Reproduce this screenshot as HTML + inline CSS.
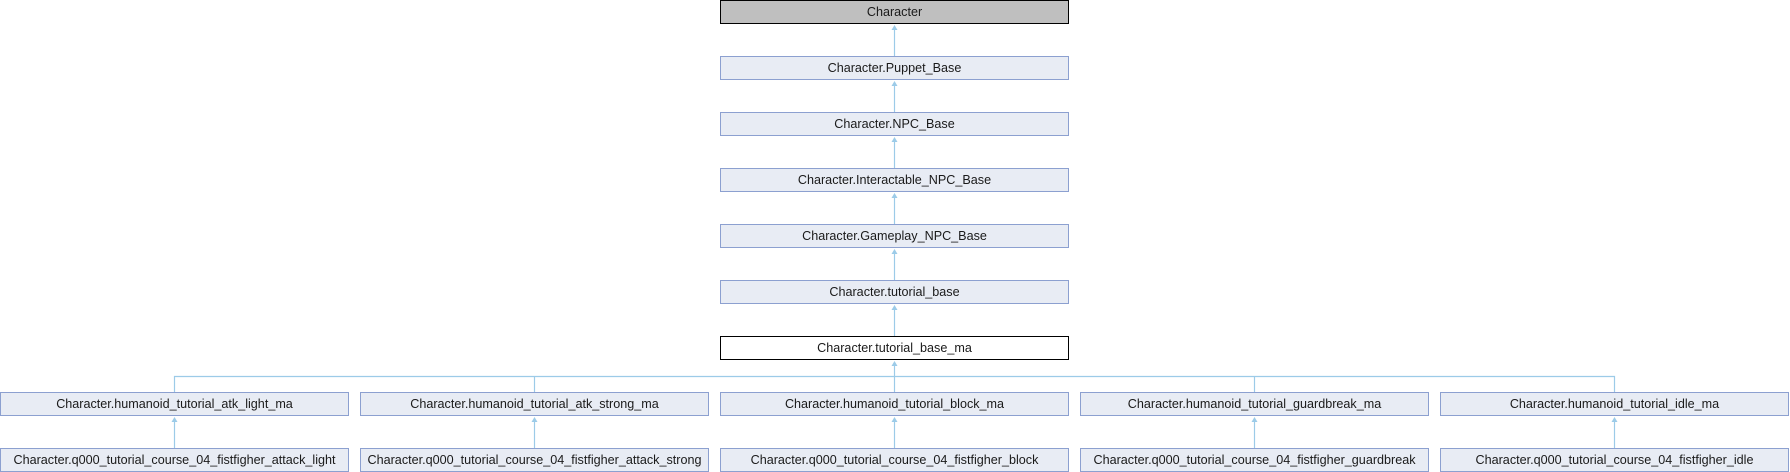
<!DOCTYPE html>
<html><head><meta charset="utf-8"><style>
html,body{margin:0;padding:0;background:#fff;width:1790px;height:472px;overflow:hidden}
svg text{font-family:"Liberation Sans",Arial,sans-serif;font-size:12.6px;fill:#1a1a1a}
</style></head><body>
<svg width="1790" height="472" xmlns="http://www.w3.org/2000/svg">
<g stroke="#9ccbe8" stroke-width="1.2" fill="none">
<line x1="894.5" y1="28" x2="894.5" y2="56"/>
<line x1="894.5" y1="84" x2="894.5" y2="112"/>
<line x1="894.5" y1="140" x2="894.5" y2="168"/>
<line x1="894.5" y1="196" x2="894.5" y2="224"/>
<line x1="894.5" y1="252" x2="894.5" y2="280"/>
<line x1="894.5" y1="308" x2="894.5" y2="336"/>
<line x1="894.5" y1="364" x2="894.5" y2="392"/>
<polyline points="174.5,392 174.5,376.5 1614.5,376.5 1614.5,392"/>
<line x1="534.5" y1="376" x2="534.5" y2="392"/>
<line x1="1254.5" y1="376" x2="1254.5" y2="392"/>
<line x1="174.5" y1="420" x2="174.5" y2="448"/>
<line x1="534.5" y1="420" x2="534.5" y2="448"/>
<line x1="894.5" y1="420" x2="894.5" y2="448"/>
<line x1="1254.5" y1="420" x2="1254.5" y2="448"/>
<line x1="1614.5" y1="420" x2="1614.5" y2="448"/>
</g>
<g fill="#9ccbe8">
<polygon points="894.5,25 891.5,30 897.5,30"/>
<polygon points="894.5,81 891.5,86 897.5,86"/>
<polygon points="894.5,137 891.5,142 897.5,142"/>
<polygon points="894.5,193 891.5,198 897.5,198"/>
<polygon points="894.5,249 891.5,254 897.5,254"/>
<polygon points="894.5,305 891.5,310 897.5,310"/>
<polygon points="894.5,361 891.5,366 897.5,366"/>
<polygon points="174.5,417 171.5,422 177.5,422"/>
<polygon points="534.5,417 531.5,422 537.5,422"/>
<polygon points="894.5,417 891.5,422 897.5,422"/>
<polygon points="1254.5,417 1251.5,422 1257.5,422"/>
<polygon points="1614.5,417 1611.5,422 1617.5,422"/>
</g>
<g stroke-width="1">
<rect x="720.5" y="0.5" width="348" height="23" fill="#bfbfbf" stroke="#000"/>
<rect x="720.5" y="56.5" width="348" height="23" fill="#e8ecf4" stroke="#8ca0d0"/>
<rect x="720.5" y="112.5" width="348" height="23" fill="#e8ecf4" stroke="#8ca0d0"/>
<rect x="720.5" y="168.5" width="348" height="23" fill="#e8ecf4" stroke="#8ca0d0"/>
<rect x="720.5" y="224.5" width="348" height="23" fill="#e8ecf4" stroke="#8ca0d0"/>
<rect x="720.5" y="280.5" width="348" height="23" fill="#e8ecf4" stroke="#8ca0d0"/>
<rect x="720.5" y="336.5" width="348" height="23" fill="#fff" stroke="#000"/>
<rect x="0.5" y="392.5" width="348" height="23" fill="#e8ecf4" stroke="#8ca0d0"/>
<rect x="360.5" y="392.5" width="348" height="23" fill="#e8ecf4" stroke="#8ca0d0"/>
<rect x="720.5" y="392.5" width="348" height="23" fill="#e8ecf4" stroke="#8ca0d0"/>
<rect x="1080.5" y="392.5" width="348" height="23" fill="#e8ecf4" stroke="#8ca0d0"/>
<rect x="1440.5" y="392.5" width="348" height="23" fill="#e8ecf4" stroke="#8ca0d0"/>
<rect x="0.5" y="448.5" width="348" height="23" fill="#e8ecf4" stroke="#8ca0d0"/>
<rect x="360.5" y="448.5" width="348" height="23" fill="#e8ecf4" stroke="#8ca0d0"/>
<rect x="720.5" y="448.5" width="348" height="23" fill="#e8ecf4" stroke="#8ca0d0"/>
<rect x="1080.5" y="448.5" width="348" height="23" fill="#e8ecf4" stroke="#8ca0d0"/>
<rect x="1440.5" y="448.5" width="348" height="23" fill="#e8ecf4" stroke="#8ca0d0"/>
</g>
<g text-anchor="middle">
<text x="894.5" y="16">Character</text>
<text x="894.5" y="72">Character.Puppet_Base</text>
<text x="894.5" y="128">Character.NPC_Base</text>
<text x="894.5" y="184">Character.Interactable_NPC_Base</text>
<text x="894.5" y="240">Character.Gameplay_NPC_Base</text>
<text x="894.5" y="296">Character.tutorial_base</text>
<text x="894.5" y="352">Character.tutorial_base_ma</text>
<text x="174.5" y="408">Character.humanoid_tutorial_atk_light_ma</text>
<text x="534.5" y="408">Character.humanoid_tutorial_atk_strong_ma</text>
<text x="894.5" y="408">Character.humanoid_tutorial_block_ma</text>
<text x="1254.5" y="408">Character.humanoid_tutorial_guardbreak_ma</text>
<text x="1614.5" y="408">Character.humanoid_tutorial_idle_ma</text>
<text x="174.5" y="464">Character.q000_tutorial_course_04_fistfigher_attack_light</text>
<text x="534.5" y="464">Character.q000_tutorial_course_04_fistfigher_attack_strong</text>
<text x="894.5" y="464">Character.q000_tutorial_course_04_fistfigher_block</text>
<text x="1254.5" y="464">Character.q000_tutorial_course_04_fistfigher_guardbreak</text>
<text x="1614.5" y="464">Character.q000_tutorial_course_04_fistfigher_idle</text>
</g>
</svg>
</body></html>
